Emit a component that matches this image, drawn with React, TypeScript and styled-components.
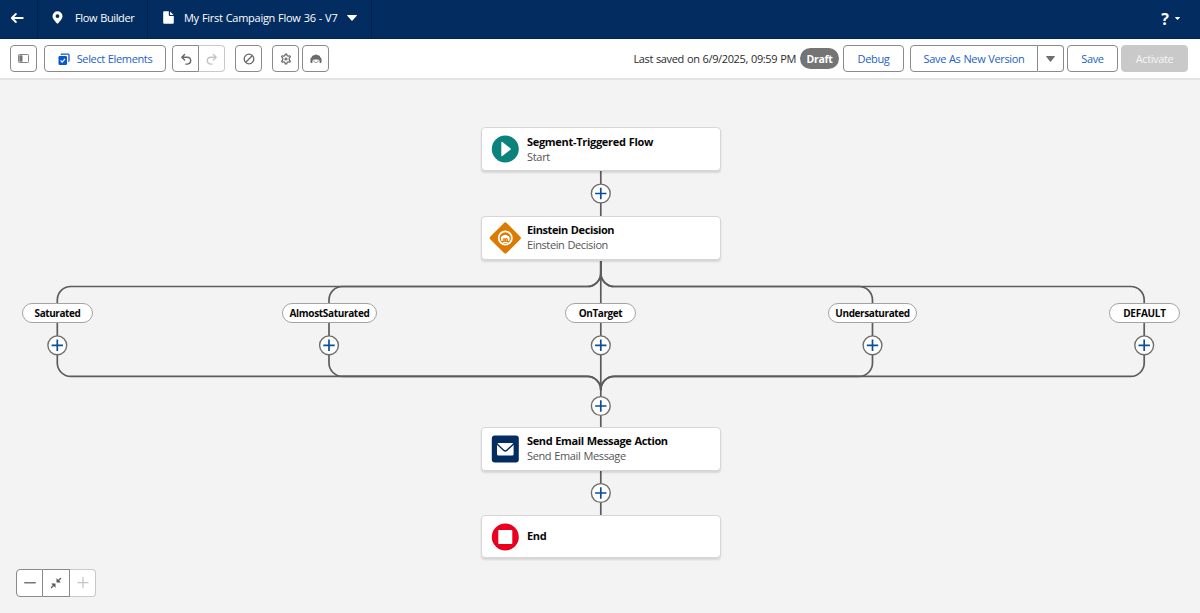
import React from 'react';
import styled, { createGlobalStyle, css } from 'styled-components';

const GlobalStyle = createGlobalStyle`
  * { box-sizing: border-box; }
  body { margin: 0; overflow: hidden; font-family: 'Open Sans', 'Noto Sans', sans-serif; font-size: 11px; color: #181818; }
  button { font: inherit; color: inherit; padding: 0; margin: 0; }
  svg { display: block; flex: none; }
`;

const Page = styled.div`
  display: flex;
  flex-direction: column;
  width: 1200px;
  height: 613px;
  background: #f3f3f3;
`;

const TopBar = styled.header`
  display: flex;
  flex: none;
  height: 39px;
  background: #032d60;
  border-bottom: 1px solid #02214b;
  color: #fff;
`;

const TopCell = styled.div<{ $width: number; $left: number; $gap: number }>`
  display: flex;
  align-items: center;
  width: ${p => p.$width}px;
  padding: 0 0 3px ${p => p.$left}px;
  gap: ${p => p.$gap}px;
  border-right: 1px solid #02214b;
`;

const Text = styled.span<{ $spacing?: number }>`
  white-space: nowrap;
  letter-spacing: ${p => p.$spacing ?? -0.36}px;
  word-spacing: 0.5px;
`;

const Help = styled.div`
  display: flex;
  align-items: center;
  gap: 6px;
  margin-left: auto;
  padding: 0 20px 1px 0;
  font-size: 16px;
  font-weight: 700;
`;

const Toolbar = styled.div`
  display: flex;
  flex: none;
  height: 41px;
  padding: 6px 12px 0 10px;
  background: #fff;
  border-bottom: 2px solid #e3e3e3;
`;

const Button = styled.button<{ $width: number; $ml?: number; $join?: 'left' | 'right' | 'middle'; $faint?: boolean; $filled?: boolean }>`
  display: flex;
  align-items: center;
  justify-content: center;
  flex: none;
  width: ${p => p.$width}px;
  height: 27px;
  margin-left: ${p => p.$ml ?? 0}px;
  border: 1px solid #8a8a8a;
  border-radius: 4px;
  background: #fff;
  color: #1b61c9;
  ${p => p.$join === 'left' && css`border-radius: 4px 0 0 4px;`}
  ${p => p.$join === 'middle' && css`border-left: 0; border-radius: 0;`}
  ${p => p.$join === 'right' && css`border-left: 0; border-radius: 0 4px 4px 0;`}
  ${p => p.$faint && css`border-color: #c9c9c9;`}
  ${p => p.$filled && css`background: #c9c9c9; border-color: #c9c9c9; color: #f6f6f6;`}
`;

const SelectContent = styled.span`
  display: flex;
  align-items: center;
  gap: 7px;
`;

const Status = styled.div`
  display: flex;
  align-items: center;
  height: 27px;
  margin-left: auto;
  gap: 4px;
  color: #2b2b2b;
`;

const Badge = styled.span`
  display: flex;
  align-items: center;
  justify-content: center;
  width: 39px;
  height: 21px;
  border-radius: 11px;
  background: #747474;
  color: #fff;
  font-size: 10.5px;
  font-weight: 700;
  letter-spacing: -0.3px;
`;

const Canvas = styled.main`
  position: relative;
  flex: 1;
`;

const Connectors = styled.svg`
  position: absolute;
  left: 0;
  top: 0;
`;

const Node = styled.div<{ $top: number; $height: number }>`
  position: absolute;
  left: 481px;
  top: ${p => p.$top}px;
  display: flex;
  align-items: center;
  width: 240px;
  height: ${p => p.$height}px;
  padding-left: 7px;
  gap: 6px;
  border: 1px solid #d6d6d6;
  border-radius: 4px;
  background: #fff;
  box-shadow: 0 2px 2px rgba(0, 0, 0, 0.12);
`;

const NodeText = styled.div<{ $lift?: number }>`
  display: flex;
  flex-direction: column;
  line-height: 15px;
  padding-bottom: ${p => p.$lift ?? 1}px;
`;

const NodeTitle = styled(Text)`
  font-weight: 700;
  color: #080707;
`;

const NodeSub = styled(Text)`
  color: #555;
`;

const Pill = styled.div<{ $x: number; $width: number }>`
  position: absolute;
  left: ${p => p.$x}px;
  top: 223px;
  display: flex;
  align-items: center;
  justify-content: center;
  width: ${p => p.$width}px;
  height: 20px;
  border: 1px solid #a3a3a3;
  border-radius: 10px;
  background: #fff;
  color: #080707;
  font-size: 10px;
  font-weight: 700;
`;

const ZoomControls = styled.div`
  position: absolute;
  left: 16px;
  top: 489px;
  display: flex;
`;

const ZoomButton = styled(Button)`
  height: 28px;
`;

const Caret = ({ w, h, color }: { w: number; h: number; color: string }) => (
  <svg width={w} height={h} viewBox="0 0 10 6" preserveAspectRatio="none">
    <path d="M.6 0h8.8q.9 0 .3.8L5.5 5.6q-.5.6-1 0L.3.8Q-.3 0 .6 0z" fill={color} />
  </svg>
);

const BackIcon = () => (
  <svg width="14" height="12" viewBox="0 0 14 12" fill="none" stroke="#fff" strokeWidth="1.8" strokeLinecap="round" strokeLinejoin="round">
    <path d="M12.8 6H1.900M5.900 2L1.800 6l4.100 4" />
  </svg>
);

const PinIcon = () => (
  <svg width="11" height="13" viewBox="0 0 11 13">
    <path fillRule="evenodd" fill="#fff" d="M5.5.3A5 5 0 0 0 .5 5.200c0 3 3.200 5.300 4.300 7.100q.7.800 1.400 0C7.300 10.500 10.500 8.200 10.500 5.200A5 5 0 0 0 5.500.3zm0 2.900a1.900 1.900 0 1 1 0 3.800 1.900 1.900 0 0 1 0-3.800z" />
  </svg>
);

const FileIcon = () => (
  <svg width="11" height="13" viewBox="0 0 11 13" fill="#fff">
    <path d="M1.300.2h4.500v3.700q0 1 1 1h4v6.800q0 1.100-1.100 1.100H1.300Q.2 12.800.2 11.700V1.300Q.2.200 1.300.2z" />
    <path d="M7 .4l3.600 3.500H7.400q-.4 0-.4-.4z" />
  </svg>
);

const PanelIcon = () => (
  <svg width="11" height="9" viewBox="0 0 11 9">
    <rect x=".5" y=".5" width="10" height="8" rx=".8" fill="#fff" stroke="#858585" />
    <rect x="1.300" y="1.300" width="3.200" height="6.400" fill="#757575" />
  </svg>
);

const SelectIcon = () => (
  <svg width="12" height="12" viewBox="0 0 12 12">
    <path d="M3.300 1.900V1.700Q3.300 1.100 4 1.100h6.200q.8 0 .8.900v5.600q0 .8-.8.800" fill="none" stroke="#0b5cd5" strokeWidth="1.300" />
    <rect x=".5" y="3" width="8.500" height="8.900" rx="1.200" fill="#0b57d0" />
    <path d="M2.600 7.400l1.600 1.800 2.800-3.400" fill="none" stroke="#fff" strokeWidth="1.200" />
  </svg>
);

const UndoIcon = ({ color, flip }: { color: string; flip?: boolean }) => (
  <svg width="12" height="12" viewBox="0 0 12 12" fill="none" stroke={color} strokeWidth="1.400" strokeLinecap="round" strokeLinejoin="round">
    <g transform={flip ? 'translate(12 0) scale(-1 1)' : undefined}>
      <path d="M4.600 1.400L1.800 4.200l2.800 2.800M2 4.200h5.300q3.400.2 3.400 3.400 0 3.200-3.200 3.500H5.800" />
    </g>
  </svg>
);

const BlockIcon = () => (
  <svg width="12" height="12" viewBox="0 0 12 12" fill="none" stroke="#666" strokeWidth="1.300">
    <circle cx="6" cy="6" r="4.800" />
    <path d="M2.800 9.200l6.400-6.400" />
  </svg>
);

const GearIcon = () => (
  <svg width="12" height="12" viewBox="0 0 12 12" fill="none" stroke="#666">
    <path
      strokeWidth="1.200"
      strokeLinejoin="round"
      d="M5.300 1h1.400l.4 1.600 1 .6 1.600-.5.7 1.200-1.200 1.200v1.800l1.200 1.200-.7 1.200-1.600-.5-1 .6-.4 1.600H5.300l-.4-1.600-1-.6-1.600.5-.7-1.200 1.200-1.200V5.100L1.600 3.900l.7-1.200 1.600.5 1-.6z"
    />
    <circle cx="6" cy="6" r="1" strokeWidth="1.100" />
  </svg>
);

const EinsteinIcon = () => (
  <svg width="12" height="11" viewBox="0 0 12 11">
    <path
      fill="#6b6b6b"
      d="M1.100 9.900C.3 9.200 0 8 .5 7.200.2 5.900.8 4.700 1.700 4.300 1.900 2.900 3.100 2 4.300 2.200c.9-1 2.500-1 3.400 0 1.300-.2 2.400.7 2.600 2.100.9.500 1.400 1.600 1.200 2.900.5.800.2 2-.6 2.700H9.600V7.800L8.500 6.500l-.8.600-.7-1-1 .9-1-.9-.7 1-.8-.6-1.100 1.300v2.100z"
    />
    <path fill="#6b6b6b" d="M3.300 7.700h1.600v.9H3.300zM7.100 7.700h1.600v.9H7.100zM4 10.100q2-1.900 4 0z" />
  </svg>
);

const StartIcon = () => (
  <svg width="32" height="32" viewBox="0 0 32 32">
    <circle cx="16.300" cy="16" r="13.500" fill="#0b827c" />
    <path d="M12.300 9.700v12.600q0 1.400 1.100.6l8-6.100q.9-.8 0-1.600l-8-6.100q-1.100-.8-1.100.6z" fill="#fff" />
  </svg>
);

const DecisionIcon = () => (
  <svg width="32" height="32" viewBox="0 0 32 32">
    <rect x="4.700" y="4.400" width="23.200" height="23.200" rx="2.200" transform="rotate(45 16.300 16)" fill="#dd7a01" />
    <circle cx="16.300" cy="16" r="6.600" fill="none" stroke="#fff" strokeWidth="1.800" />
    <path
      fill="#fff"
      d="M12.400 18.900c-1.100-2.900-.2-4.800 1.400-5.100 1.400-1.500 3.500-1.500 4.900 0 1.700.3 2.600 2.200 1.500 5.100h-1.300v-2l-1.100-.9-1.500.6-1.500-.6-1.100.9v2z"
    />
    <path fill="#fff" d="M14.400 17.400h1.100v1h-1.100zM17.100 17.400h1.100v1h-1.100zM13 21q3.300-2.600 6.600 0z" />
  </svg>
);

const MailIcon = () => (
  <svg width="32" height="32" viewBox="0 0 32 32">
    <rect x="2.800" y="2.500" width="27" height="27" rx="3" fill="#032d60" />
    <rect x="8" y="9.900" width="16.600" height="12.500" rx="1.500" fill="#fff" />
    <path d="M7.500 10.500l7.400 6.900q1.400 1.200 2.800 0l7.400-6.900" fill="none" stroke="#032d60" strokeWidth="1.400" />
  </svg>
);

const EndIcon = () => (
  <svg width="32" height="32" viewBox="0 0 32 32">
    <circle cx="16.300" cy="16" r="13.500" fill="#ea001e" />
    <rect x="9.300" y="9" width="14" height="14" rx=".8" fill="#fff" />
  </svg>
);

const MinusIcon = () => (
  <svg width="12" height="12" viewBox="0 0 12 12"><path d="M.8 5.700h10.400" stroke="#777" strokeWidth="1.500" strokeLinecap="round" /></svg>
);

const PlusIcon = () => (
  <svg width="12" height="12" viewBox="0 0 12 12"><path d="M1 5.700h10M6 .7v10" stroke="#c4c4c4" strokeWidth="1.300" strokeLinecap="round" /></svg>
);

const FitIcon = () => (
  <svg width="12" height="12" viewBox="0 0 12 12" fill="#5f5f5f" stroke="#5f5f5f">
    <path strokeWidth="1.400" strokeLinecap="round" d="M10.500 1.500L8.300 3.700M1.500 10.500l2.200-2.200" />
    <path strokeWidth=".6" strokeLinejoin="round" d="M6.800 1.700v3.500h3.500zM5.200 10.300V6.800H1.700z" />
  </svg>
);

const branches = [
  { label: 'Saturated', x: 57.3, left: 22, width: 71, spacing: -0.42 },
  { label: 'AlmostSaturated', x: 329, left: 282, width: 95, spacing: -0.33 },
  { label: 'OnTarget', x: 600.8, left: 565, width: 71, spacing: -0.4 },
  { label: 'Undersaturated', x: 872.5, left: 828, width: 89, spacing: -0.4 },
  { label: 'DEFAULT', x: 1144.2, left: 1109, width: 71, spacing: -0.25 },
];

const CX = 600.8;

const branchPath = (x: number) => {
  if (x === CX) return `M${CX} 181V311`;
  const d = x < CX ? 1 : -1;
  const r = 13.5;
  const inward = d === 1 ? 1 : 0;
  const outward = 1 - inward;
  return [
    `M${CX} 181V193`,
    `A${r} ${r} 0 0 ${inward} ${CX - r * d} 206.500`,
    `H${x + r * d}`,
    `A${r} ${r} 0 0 ${outward} ${x} 220`,
    'V283',
    `A${r} ${r} 0 0 ${outward} ${x + r * d} 296.400`,
    `H${CX - r * d}`,
    `A${r} ${r} 0 0 ${inward} ${CX} 310`,
  ].join('');
};

const AddPoint = ({ x, y }: { x: number; y: number }) => (
  <g transform={`translate(${x} ${y})`}>
    <circle r="9.400" fill="#fff" stroke="#706e6b" strokeWidth="1.400" />
    <path d="M-5.700 0H5.700M0-5.700V5.700" stroke="#0b4f9c" strokeWidth="1.700" />
  </g>
);

export default function App() {
  return (
    <Page>
      <GlobalStyle />
      <TopBar>
        <TopCell $width={38} $left={10} $gap={0}><BackIcon /></TopCell>
        <TopCell $width={110} $left={14} $gap={12}>
          <PinIcon />
          <Text>Flow Builder</Text>
        </TopCell>
        <TopCell $width={224} $left={15} $gap={10}>
          <FileIcon />
          <Text $spacing={-0.28}>My First Campaign Flow 36 - V7</Text>
          <Caret w={10} h={6} color="#fff" />
        </TopCell>
        <Help><span>?</span><Caret w={5} h={3} color="#fff" /></Help>
      </TopBar>
      <Toolbar>
        <Button $width={27}><PanelIcon /></Button>
        <Button $width={122} $ml={7}>
          <SelectContent><SelectIcon /><Text>Select Elements</Text></SelectContent>
        </Button>
        <Button $width={27} $ml={6} $join="left"><UndoIcon color="#666" /></Button>
        <Button $width={26} $join="right" $faint><UndoIcon color="#c4c4c4" flip /></Button>
        <Button $width={27} $ml={10}><BlockIcon /></Button>
        <Button $width={27} $ml={10}><GearIcon /></Button>
        <Button $width={27} $ml={3}><EinsteinIcon /></Button>
        <Status>
          <Text>Last saved on 6/9/2025, 09:59 PM</Text>
          <Badge>Draft</Badge>
        </Status>
        <Button $width={61} $ml={4}><Text>Debug</Text></Button>
        <Button $width={128} $ml={6} $join="left"><Text>Save As New Version</Text></Button>
        <Button $width={26} $join="right"><Caret w={9} h={6} color="#706e6b" /></Button>
        <Button $width={51} $ml={3}><Text>Save</Text></Button>
        <Button $width={67} $ml={3} $filled><Text>Activate</Text></Button>
      </Toolbar>
      <Canvas>
        <Connectors width="1200" height="533" viewBox="0 0 1200 533">
          <g fill="none" stroke="#5c5c5c" strokeWidth="1.700">
            <path d={`M${CX} 91V137M${CX} 309V348M${CX} 391V436`} />
            {branches.map(b => <path key={b.label} d={branchPath(b.x)} />)}
          </g>
          {branches.map(b => <AddPoint key={b.label} x={b.x} y={265.300} />)}
          <AddPoint x={CX} y={113.500} />
          <AddPoint x={CX} y={326} />
          <AddPoint x={CX} y={413} />
        </Connectors>
        {branches.map(b => (
          <Pill key={b.label} $x={b.left} $width={b.width}><Text $spacing={b.spacing}>{b.label}</Text></Pill>
        ))}
        <Node $top={47} $height={44}>
          <StartIcon />
          <NodeText><NodeTitle $spacing={-0.3}>Segment-Triggered Flow</NodeTitle><NodeSub $spacing={-0.3}>Start</NodeSub></NodeText>
        </Node>
        <Node $top={136} $height={44}>
          <DecisionIcon />
          <NodeText $lift={2}><NodeTitle $spacing={-0.4}>Einstein Decision</NodeTitle><NodeSub $spacing={-0.38}>Einstein Decision</NodeSub></NodeText>
        </Node>
        <Node $top={347} $height={44}>
          <MailIcon />
          <NodeText $lift={3}><NodeTitle>Send Email Message Action</NodeTitle><NodeSub>Send Email Message</NodeSub></NodeText>
        </Node>
        <Node $top={435} $height={43}>
          <EndIcon />
          <NodeText $lift={3}><NodeTitle>End</NodeTitle></NodeText>
        </Node>
        <ZoomControls>
          <ZoomButton $width={27} $join="left"><MinusIcon /></ZoomButton>
          <ZoomButton $width={27} $join="middle"><FitIcon /></ZoomButton>
          <ZoomButton $width={26} $join="right" $faint><PlusIcon /></ZoomButton>
        </ZoomControls>
      </Canvas>
    </Page>
  );
}
